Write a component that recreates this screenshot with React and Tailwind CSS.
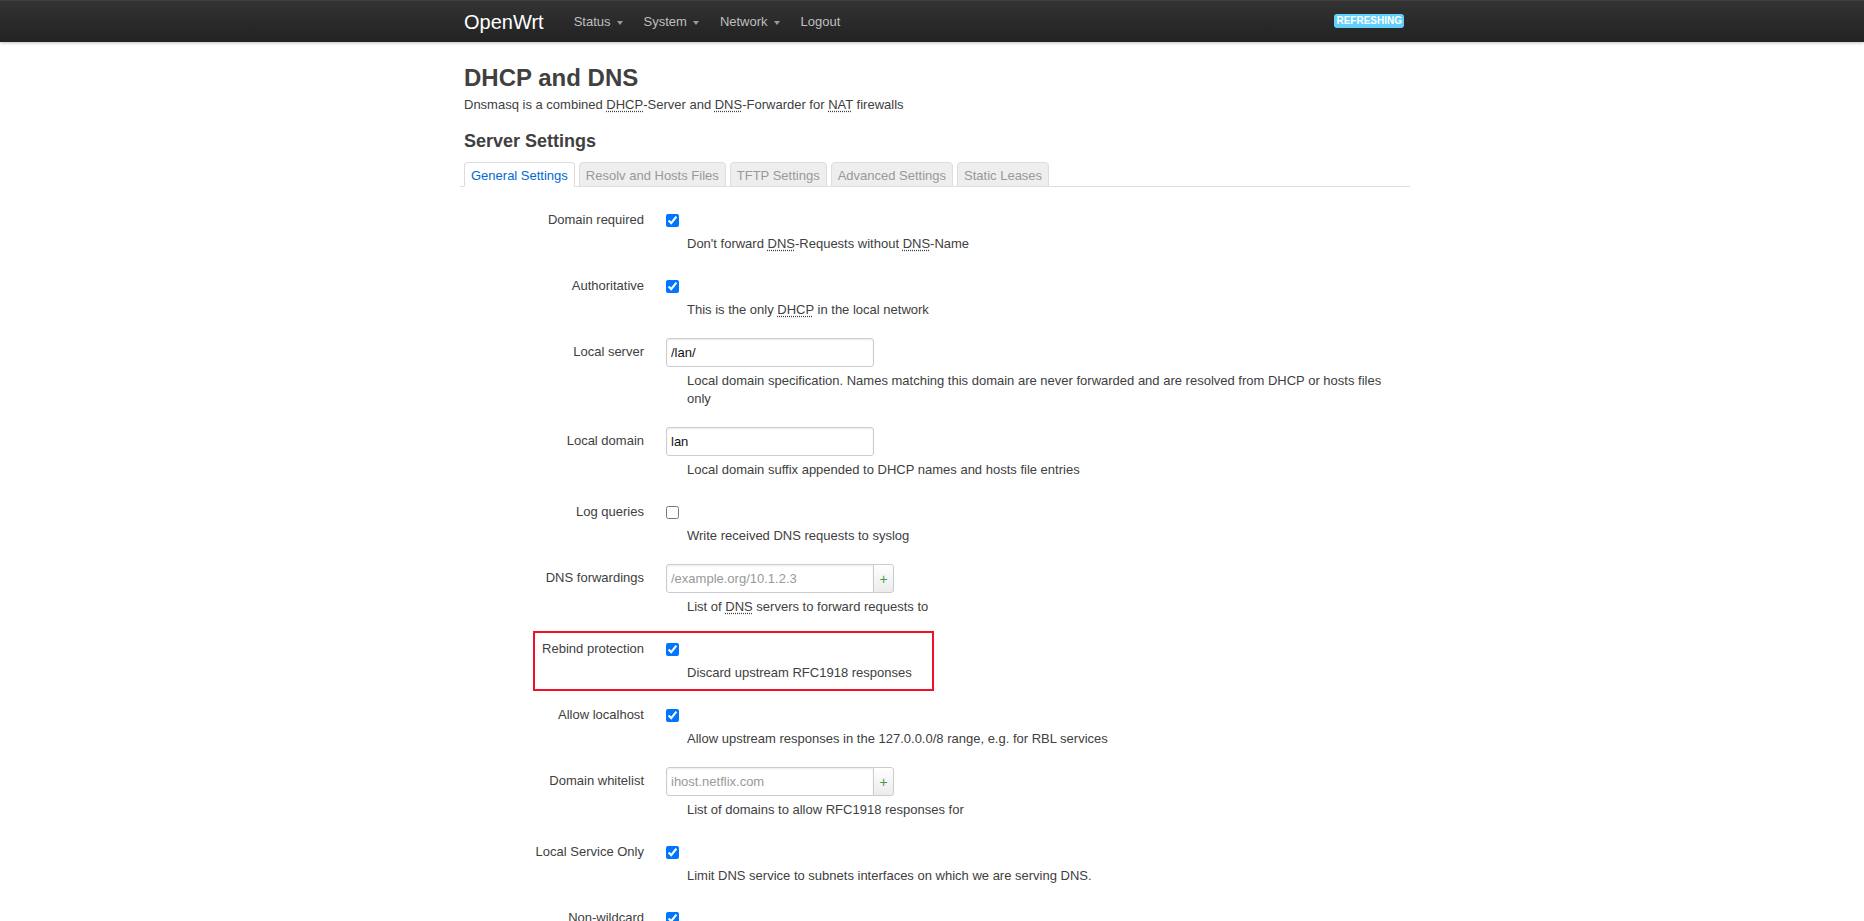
import React from 'react';

const Abbr = ({ children }) => <span className="underline decoration-dotted underline-offset-2">{children}</span>;

const rows = [
    { label: 'Domain required', type: 'check', checked: true, desc: <>Don't forward <Abbr>DNS</Abbr>-Requests without <Abbr>DNS</Abbr>-Name</> },
    { label: 'Authoritative', type: 'check', checked: true, desc: <>This is the only <Abbr>DHCP</Abbr> in the local network</> },
    { label: 'Local server', type: 'text', value: '/lan/', desc: 'Local domain specification. Names matching this domain are never forwarded and are resolved from DHCP or hosts files only' },
    { label: 'Local domain', type: 'text', value: 'lan', desc: 'Local domain suffix appended to DHCP names and hosts file entries' },
    { label: 'Log queries', type: 'check', checked: false, desc: 'Write received DNS requests to syslog' },
    { label: 'DNS forwardings', type: 'list', placeholder: '/example.org/10.1.2.3', desc: <>List of <Abbr>DNS</Abbr> servers to forward requests to</> },
    { label: 'Rebind protection', type: 'check', checked: true, marked: true, desc: 'Discard upstream RFC1918 responses' },
    { label: 'Allow localhost', type: 'check', checked: true, desc: 'Allow upstream responses in the 127.0.0.0/8 range, e.g. for RBL services' },
    { label: 'Domain whitelist', type: 'list', placeholder: 'ihost.netflix.com', desc: 'List of domains to allow RFC1918 responses for' },
    { label: 'Local Service Only', type: 'check', checked: true, desc: 'Limit DNS service to subnets interfaces on which we are serving DNS.' },
    { label: 'Non-wildcard', type: 'check', checked: true, desc: 'Bind only to specific interfaces rather than wildcard address.' },
];

const tabs = ['General Settings', 'Resolv and Hosts Files', 'TFTP Settings', 'Advanced Settings', 'Static Leases'];

const Caret = () => <span className="ml-[6px] inline-block w-0 h-0 border-t-[4px] border-x-[3.5px] border-x-transparent border-t-[#9a9a9a] mt-[1px]" />;

const Field = ({ row }) => {
    if (row.type === 'check') {
        return (
            <div className="h-[24px] pt-[8px]">
                <input type="checkbox" defaultChecked={row.checked} className="m-0 w-[13px] h-[13px] accent-[#0075ff] block" />
            </div>
        );
    }
    if (row.type === 'text') {
        return (
            <input
                type="text"
                defaultValue={row.value}
                className="block w-[208px] h-[29px] px-[4px] border border-[#ccc] rounded-[3px] text-[13px] text-[#111] shadow-[inset_0_1px_2px_rgba(0,0,0,0.08)] outline-none"
            />
        );
    }
    return (
        <div className="flex h-[29px]">
            <input
                type="text"
                placeholder={row.placeholder}
                className="block w-[208px] h-[29px] px-[4px] border border-[#ccc] rounded-l-[3px] text-[13px] text-[#111] placeholder:text-[#999] shadow-[inset_0_1px_2px_rgba(0,0,0,0.08)] outline-none"
            />
            <button className="-ml-px w-[21px] h-[29px] border border-[#ccc] rounded-r-[3px] bg-gradient-to-b from-white to-[#ececec] text-[#3f9f3f] text-[14px] leading-none flex items-center justify-center">+</button>
        </div>
    );
};

export default function App() {
    return (
        <div className="min-h-screen bg-white font-['Liberation_Sans',Arial,Helvetica,sans-serif] text-[13px] leading-[18px] text-[#404040]">
            <div className="h-[42px] bg-gradient-to-b from-[#333] to-[#222] shadow-[0_1px_3px_rgba(0,0,0,0.25)] border-t border-[#3d3d3d]">
                <div className="w-[940px] mx-auto h-full flex items-center">
                    <span className="ml-[2px] text-white text-[20px] leading-[24px] pt-[1px] mr-[30px]">OpenWrt</span>
                    <nav className="flex items-center gap-[21px] pt-[1px] text-[#bfbfbf]">
                        <span className="flex items-center">Status<Caret /></span>
                        <span className="flex items-center">System<Caret /></span>
                        <span className="flex items-center">Network<Caret /></span>
                        <span>Logout</span>
                    </nav>
                    <span className="ml-auto -mr-[2px] mb-[2px] bg-[#62cffc] text-white text-[10px] font-bold leading-[14px] px-[2px] rounded-[3px] uppercase">Refreshing</span>
                </div>
            </div>

            <div className="w-[940px] mx-auto">
                <div className="pl-[2px]">
                    <h2 className="mt-[18px] text-[24px] leading-[36px] font-bold">DHCP and DNS</h2>
                    <p>Dnsmasq is a combined <Abbr>DHCP</Abbr>-Server and <Abbr>DNS</Abbr>-Forwarder for <Abbr>NAT</Abbr> firewalls</p>
                    <h3 className="mt-[14px] text-[18px] leading-[27px] font-bold">Server Settings</h3>
                </div>

                <ul className="mt-[7px] -ml-[2px] w-[950px] flex border-b border-[#ddd] pl-[4px]">
                    {tabs.map((t, i) => (
                        <li
                            key={t}
                            className={
                                i === 0
                                    ? '-mb-px mr-[4px] px-[6px] pt-[4px] pb-[1px] border border-[#ddd] border-b-white bg-white rounded-t-[4px] text-[#0069d6]'
                                    : '-mb-px mr-[4px] px-[6px] pt-[4px] pb-[1px] border border-[#ddd] bg-[#eee] rounded-t-[4px] text-[#999]'
                            }
                        >
                            {t}
                        </li>
                    ))}
                </ul>

                <div className="pt-[19px]">
                    {rows.map(row => (
                        <div key={row.label} className="relative flex pb-[19px]">
                            {row.marked && <div className="absolute left-[71px] -top-[4px] w-[401px] h-[60px] border-2 border-[#ef1029]" />}
                            <label className="w-[182px] shrink-0 text-right pt-[5px]">{row.label}</label>
                            <div className="ml-[22px] flex-1">
                                <Field row={row} />
                                <div className="mt-[5px] pl-[21px]">{row.desc}</div>
                            </div>
                        </div>
                    ))}
                </div>
            </div>
        </div>
    );
}
